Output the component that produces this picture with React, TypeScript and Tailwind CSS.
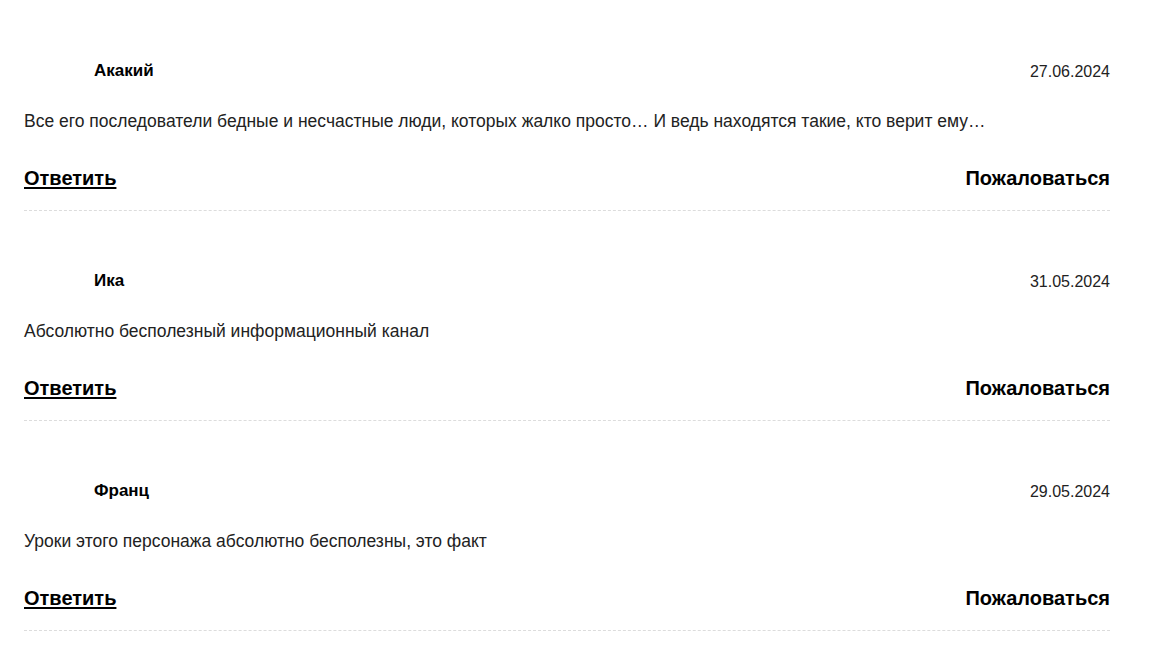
import React from "react";

const comments = [
  {
    name: "Акакий",
    date: "27.06.2024",
    text: "Все его последователи бедные и несчастные люди, которых жалко просто… И ведь находятся такие, кто верит ему…",
  },
  { name: "Ика", date: "31.05.2024", text: "Абсолютно бесполезный информационный канал" },
  { name: "Франц", date: "29.05.2024", text: "Уроки этого персонажа абсолютно бесполезны, это факт" },
];

export default function App() {
  return (
    <div
      className="min-h-[667px] bg-white pt-px pl-[24px] pr-[40px]"
      style={{ fontFamily: '"Liberation Sans", Arial, sans-serif' }}
    >
      {comments.map((c) => (
        <div key={c.name} className="pt-[57px] pb-[18px] border-b border-dashed border-[#dcdcdc]">
          <div className="flex items-center justify-between h-[24px]">
            <div className="pl-[70px] text-[17px] font-bold text-black leading-[24px] pt-px">{c.name}</div>
            <div className="text-[16px] text-[#222] leading-[24px] pt-[3px]">{c.date}</div>
          </div>
          <p className="mt-[27px] text-[17.5px] leading-[24px] text-[#222]">{c.text}</p>
          <div className="mt-[31px] flex items-center justify-between h-[28px]">
            <a className="text-[20px] font-bold text-black underline leading-[28px] underline-offset-2 cursor-pointer">
              Ответить
            </a>
            <a className="text-[20px] font-bold text-black leading-[28px] cursor-pointer">Пожаловаться</a>
          </div>
        </div>
      ))}
    </div>
  );
}
